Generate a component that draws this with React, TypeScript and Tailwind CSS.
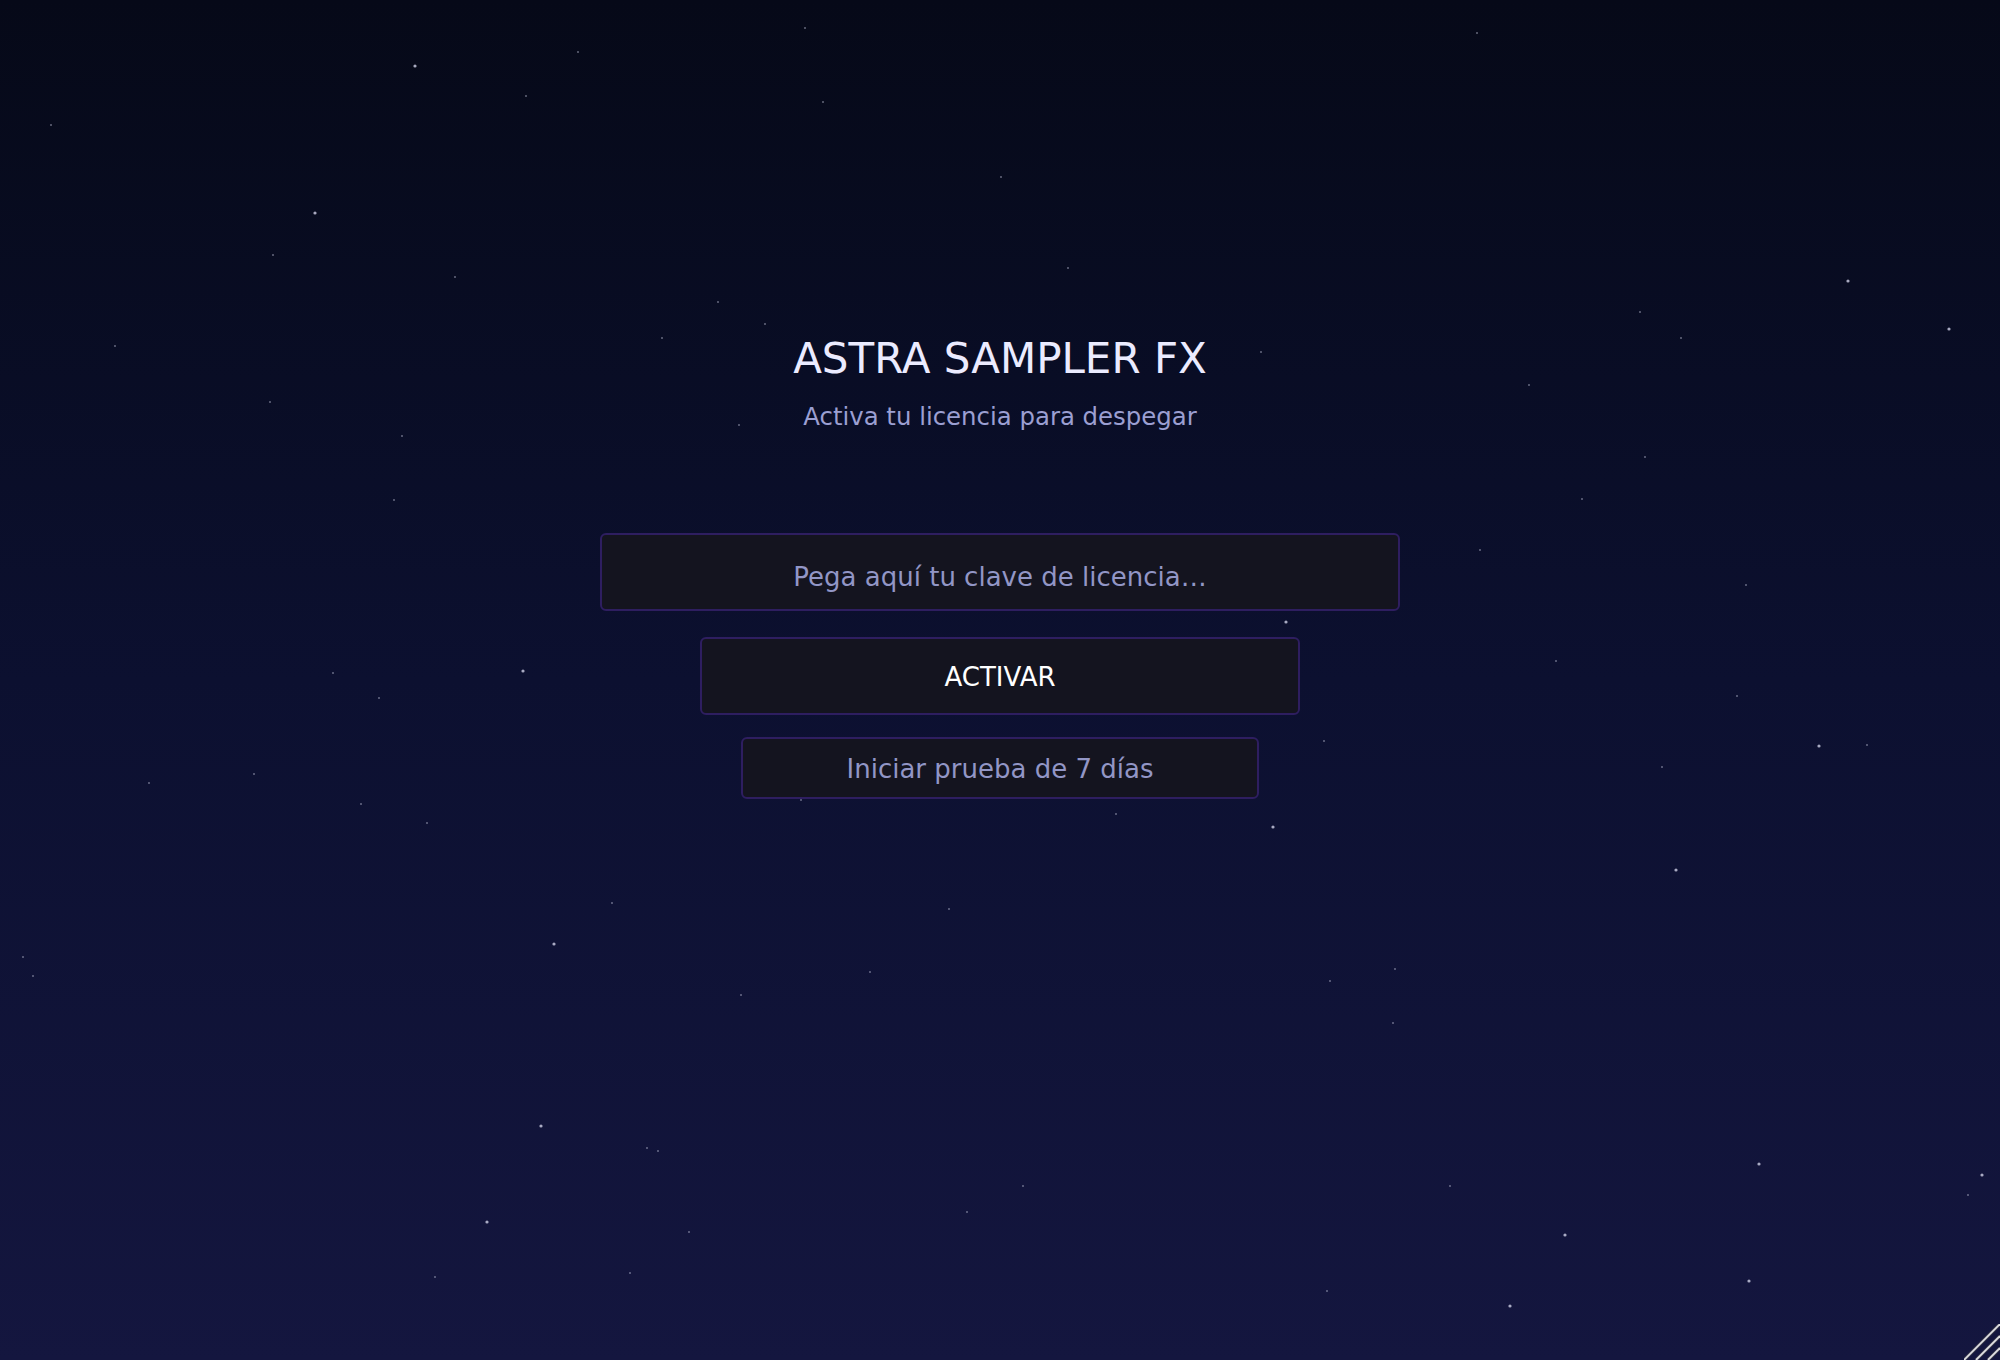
import React, { useState } from "react";

type Star = [number, number, number];

// x, y, size (1 = faint speck, 2 = brighter star)
const stars: Star[] = [
  [415, 66, 2], [823, 102, 1], [1001, 177, 1], [315, 213, 2], [273, 255, 1],
  [455, 277, 1], [1068, 268, 1], [1848, 281, 2], [1949, 329, 2], [765, 324, 1],
  [718, 302, 1], [662, 338, 1], [1261, 352, 1], [1681, 338, 1], [1640, 312, 1],
  [1529, 385, 1], [739, 425, 1], [402, 436, 1], [1645, 457, 1], [394, 500, 1],
  [1582, 499, 1], [1480, 550, 1], [1746, 585, 1], [1286, 622, 2], [1556, 661, 1],
  [523, 671, 2], [333, 673, 1], [379, 698, 1], [1737, 696, 1], [1324, 741, 1],
  [1819, 746, 2], [1867, 745, 1], [254, 774, 1], [149, 783, 1], [1662, 767, 1],
  [801, 800, 1], [1116, 814, 1], [1273, 827, 2], [427, 823, 1], [361, 804, 1],
  [1676, 870, 2], [612, 903, 1], [949, 909, 1], [554, 944, 2], [23, 957, 1],
  [33, 976, 1], [870, 972, 1], [1330, 981, 1], [1395, 969, 1], [741, 995, 1],
  [1393, 1023, 1], [541, 1126, 2], [647, 1148, 1], [658, 1151, 1], [1023, 1186, 1],
  [1450, 1186, 1], [1759, 1164, 2], [1982, 1175, 2], [1968, 1195, 1], [967, 1212, 1],
  [487, 1222, 2], [689, 1232, 1], [1565, 1235, 2], [1749, 1281, 2], [1510, 1306, 2],
  [435, 1277, 1], [630, 1273, 1], [1327, 1291, 1], [51, 125, 1], [115, 346, 1],
  [270, 402, 1], [1477, 33, 1], [578, 52, 1], [805, 28, 1], [526, 96, 1],
];

const Starfield = () => (
  <svg
    className="absolute inset-0 w-full h-full pointer-events-none"
    viewBox="0 0 2000 1360"
    preserveAspectRatio="none"
  >
    {stars.map(([x, y, s], i) => (
      <circle
        key={i}
        cx={x}
        cy={y}
        r={s === 2 ? 1.6 : 1}
        fill="#c4c6dc"
        opacity={s === 2 ? 0.85 : 0.5}
      />
    ))}
  </svg>
);

const ResizeGrip = () => (
  <svg
    className="absolute right-0 bottom-0"
    width="36"
    height="36"
    viewBox="0 0 36 36"
  >
    {[0, 12, 24].map((o) => (
      <g key={o}>
        <line x1={o} y1={36} x2={36} y2={o} stroke="#3a3a4a" strokeWidth="3.4" />
        <line x1={o} y1={36} x2={36} y2={o} stroke="#e0e0e4" strokeWidth="1.8" />
      </g>
    ))}
  </svg>
);

const App: React.FC = () => {
  const [licenseKey, setLicenseKey] = useState("");

  return (
    <div className="relative w-full h-[1360px] overflow-hidden bg-gradient-to-b from-[#060918] via-[#0c1030] to-[#14163f] font-['DejaVu_Sans',sans-serif]">
      <Starfield />

      <div className="relative flex flex-col items-center pt-[338px]">
        <h1 className="text-[42px] leading-none text-[#ebebff]">ASTRA SAMPLER FX</h1>
        <p className="mt-[25px] text-[24.4px] leading-none text-[#9b9fd2]">
          Activa tu licencia para despegar
        </p>

        <input
          value={licenseKey}
          onChange={(e) => setLicenseKey(e.target.value)}
          placeholder="Pega aquí tu clave de licencia…"
          className="mt-[104px] w-[800px] h-[78px] pt-[10px] rounded-md border-2 border-[#2e1e60] bg-[#14141f] text-center text-[26px] text-[#ebebff] placeholder:text-[#9296c6] outline-none"
        />

        <button className="mt-[26px] w-[600px] h-[78px] pt-[2px] rounded-md border-2 border-[#2e1e60] bg-[#14141f] text-[26px] text-white">
          ACTIVAR
        </button>

        <button className="mt-[22px] w-[518px] h-[62px] pt-[2px] rounded-md border-2 border-[#2e1e60] bg-[#14141f] text-[26px] text-[#9296c6]">
          Iniciar prueba de 7 días
        </button>
      </div>

      <ResizeGrip />
    </div>
  );
};

export default App;
